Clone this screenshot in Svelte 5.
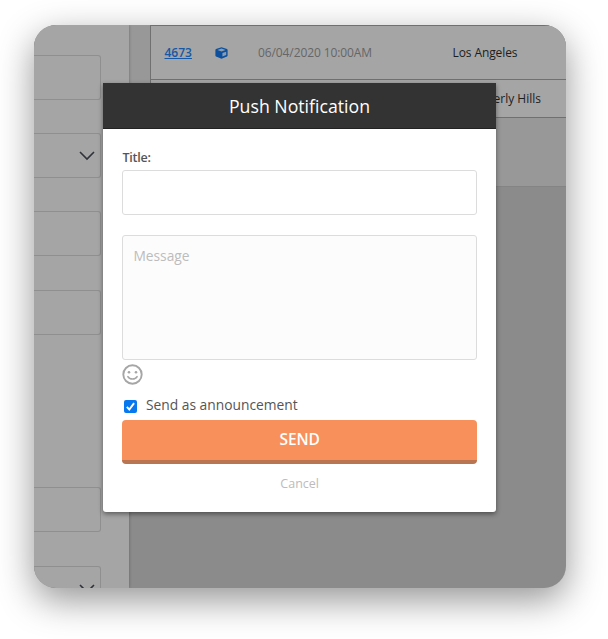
<script>
  let title = $state('');
  let message = $state('');
  let announce = $state(true);
  const fields = [
    { gap: 30, select: false },
    { gap: 33, select: true },
    { gap: 33, select: false },
    { gap: 34, select: false },
    { gap: 152, select: false },
    { gap: 34, select: true }
  ];
</script>

<main>
  <div class="window">
    <aside>
      {#each fields as field}
        <div class="field" style="margin-top: {field.gap}px">
          {#if field.select}
            <svg width="16" height="10" viewBox="0 0 16 10"><path d="M1 1l7 7 7-7" fill="none" stroke="#30323a" stroke-width="1.6" /></svg>
          {/if}
        </div>
      {/each}
    </aside>
    <section class="content">
      <div class="list">
        <div class="row first">
          <a href="#order">4673</a>
          <svg class="cube" width="13" height="12" viewBox="0 0 13 12">
            <path d="M6.5 0.2L12 2Q12.6 2.3 12.6 3V8.6Q12.6 9.2 12 9.6L6.5 11.8 1 9.6Q.4 9.2.4 8.6V3Q.4 2.3 1 2z" fill="#0b4f9e" />
            <path d="M2.4 3L6.5 1.6 10.6 3 6.5 4.5zM7.4 6.1l3.8-1.4v3.2L7.4 9.6z" fill="#8d9cad" />
          </svg>
          <time>06/04/2020 10:00AM</time>
          <span class="city">Los Angeles</span>
        </div>
        <div class="row second"><span>Beverly Hills</span></div>
      </div>
    </section>

    <div class="dialog">
      <header>Push Notification</header>
      <form>
        <label class="title" for="title">Title:</label>
        <input class="text" id="title" bind:value={title} />
        <textarea placeholder="Message" bind:value={message}></textarea>
        <svg class="smile" width="21" height="21" viewBox="0 0 21 21" fill="none" stroke="#a6a6a6" stroke-width="1.9">
          <circle cx="10.5" cy="10.5" r="9.2" />
          <path d="M5.9 12.6c1.8 3.2 7.4 3.2 9.2 0" stroke-linecap="round" stroke-width="1.6" />
          <circle cx="7" cy="8.2" r="1.3" fill="#a6a6a6" stroke="none" />
          <circle cx="14" cy="8.2" r="1.3" fill="#a6a6a6" stroke="none" />
        </svg>
        <label class="check">
          <input type="checkbox" bind:checked={announce} />
          <span class="box">
            {#if announce}
              <svg width="13" height="13" viewBox="0 0 13 13"><path d="M2.8 6.9l2.5 2.6 4.8-6.3" fill="none" stroke="#fff" stroke-width="1.9" /></svg>
            {/if}
          </span>
          <span>Send as announcement</span>
        </label>
        <button class="send" type="button">SEND</button>
        <button class="cancel" type="button">Cancel</button>
      </form>
    </div>
  </div>
</main>

<style>
  :global(body) { background: #fff; }
  * { box-sizing: border-box; }
  main {
    width: 608px;
    height: 639px;
    padding: 25px 0 0 34px;
    overflow: hidden;
    font-family: 'Open Sans', sans-serif;
  }
  .window {
    position: relative;
    display: flex;
    width: 532px;
    height: 563px;
    overflow: hidden;
    border-radius: 22px;
    background: #8b8b8b;
    box-shadow: 0 12px 36px rgba(0, 0, 0, 0.42);
  }
  aside {
    z-index: 1;
    flex: none;
    width: 95px;
    height: 563px;
    overflow: hidden;
    background: #a5a5a5;
    box-shadow: 0 0 3px rgba(0, 0, 0, 0.3);
  }
  .field {
    display: flex;
    align-items: center;
    justify-content: flex-end;
    width: 67px;
    height: 45px;
    padding-right: 5px;
    border: 1px solid #8f8f8f;
    border-left: 0;
    border-radius: 0 3px 3px 0;
  }
  .content {
    flex: 1;
    height: 162px;
    padding-left: 21px;
    background: #989898;
    border-bottom: 1px solid #848484;
  }
  .list {
    border: solid #707070;
    border-width: 1px 0 1px 1px;
    background: #a5a5a5;
    font-size: 12px;
    color: #1d1d1d;
  }
  .row { display: flex; align-items: center; white-space: nowrap; }
  .first { height: 54px; border-bottom: 1px solid #707070; }
  .second { height: 37px; padding-left: 322px; }
  a { width: 50px; margin-left: 13.5px; color: #1558a5; font-weight: 600; }
  .cube { margin-right: 30.5px; }
  time { width: 194.5px; color: #666; letter-spacing: -0.1px; }
  .city { letter-spacing: -0.1px; }
  .dialog {
    position: absolute;
    z-index: 2;
    left: 69px;
    top: 58px;
    width: 393px;
    height: 429px;
    border-radius: 0 0 3px 3px;
    background: #fff;
    box-shadow: 0 2px 5px rgba(0, 0, 0, 0.45);
  }
  header {
    height: 46px;
    border-bottom: 1px solid #222;
    background: #333;
    color: #fff;
    font-size: 17.7px;
    line-height: 46px;
    text-align: center;
  }
  form {
    display: flex;
    flex-direction: column;
    padding: 19px 19px 0 19.4px;
  }
  .title { height: 22px; color: #555; font-size: 12.5px; font-weight: 600; letter-spacing: -0.2px; line-height: 19px; }
  .text {
    width: 100%;
    height: 45px;
    border: 1px solid #dcdcdc;
    border-radius: 3px;
    outline: none;
  }
  textarea {
    height: 125px;
    margin: 20px 0 4px;
    padding: 10px;
    resize: none;
    border: 1px solid #dcdcdc;
    border-radius: 3px;
    outline: none;
    background: #fcfcfc;
    font: 13.8px/19px 'Open Sans', sans-serif;
  }
  textarea::placeholder { color: #bcbcbc; opacity: 1; }
  .smile { margin-left: -0.4px; }
  .check {
    display: flex;
    align-items: center;
    height: 20px;
    margin: 10px 0 5px 1.6px;
    color: #555;
    font-size: 13.8px;
    line-height: 20px;
  }
  .check input { position: absolute; opacity: 0; }
  .box {
    width: 13px;
    height: 13px;
    margin: 3px 9px 0 0;
    border-radius: 2px;
    background: #0878ee;
  }
  .box svg { display: block; }
  button { border: 0; padding: 0; font-family: inherit; }
  .send {
    height: 44px;
    padding-bottom: 2px;
    border-bottom: 4px solid #b97452;
    border-radius: 4px;
    background: #f8905b;
    color: #fff;
    font-size: 15.5px;
    font-weight: 600;
    letter-spacing: -0.1px;
  }
  .cancel {
    align-self: center;
    height: 20px;
    margin-top: 9px;
    background: none;
    color: #bcbcbc;
    font-size: 12.5px;
  }
</style>
